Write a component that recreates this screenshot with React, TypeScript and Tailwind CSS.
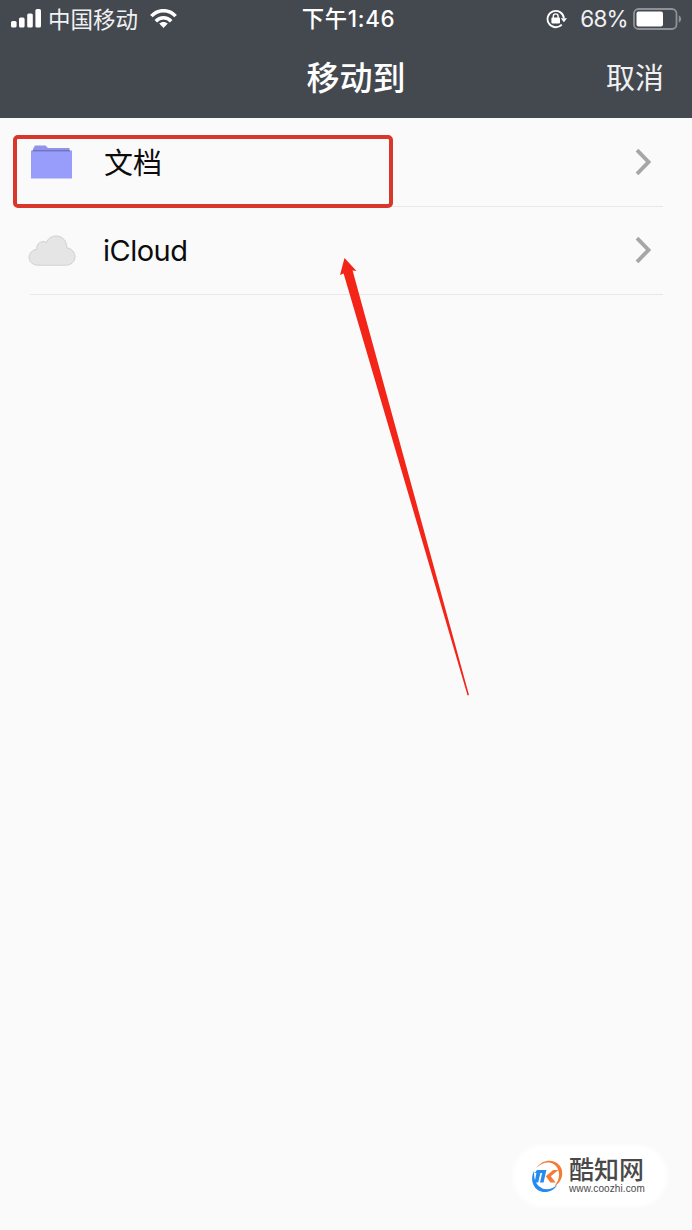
import type { ReactNode } from "react";

const cjk = "font-['Inter','Noto_Sans_CJK_SC',sans-serif]";

type LocationRowProps = {
  icon: ReactNode;
  label: string;
  labelClassName: string;
};

function SignalIcon() {
  return (
    <svg className="mb-[1px] h-[19px] w-[30px] shrink-0" viewBox="0 0 30 19" fill="#fff">
      <rect x="0" y="12" width="5.6" height="6.5" rx="1.6" />
      <rect x="8" y="8.5" width="5.6" height="10" rx="1.6" />
      <rect x="16.2" y="4.5" width="5.6" height="14" rx="1.6" />
      <rect x="24.4" y="0" width="5.6" height="18.5" rx="1.6" />
    </svg>
  );
}

function WifiIcon() {
  return (
    <svg className="h-[20px] w-[27px] shrink-0" viewBox="0 0 27 20">
      <g fill="none" stroke="#fff" strokeWidth="3.5">
        <path d="M1.4 7.2C8 -0.2 19 -0.2 25.6 7.2" />
        <path d="M5.8 12.2C10.2 7.6 16.8 7.6 21.2 12.2" />
      </g>
      <path d="M9.2 14.6C11.6 12.3 15.4 12.3 17.8 14.6L13.5 19Z" fill="#fff" />
    </svg>
  );
}

function RotationLockIcon() {
  return (
    <svg className="h-[20px] w-[21px] shrink-0" viewBox="0 0 21 20">
      <path d="M15.8 15.6A8.2 8.2 0 1 1 17.9 9.2" fill="none" stroke="#fff" strokeWidth="1.8" />
      <path d="M14.8 9.2H21L17.9 13.2Z" fill="#fff" />
      <rect x="5.4" y="8.6" width="8.6" height="5.8" rx="0.8" fill="#fff" />
      <path d="M7.3 9V7.3a2.4 2.4 0 0 1 4.8 0V9" fill="none" stroke="#fff" strokeWidth="1.4" />
    </svg>
  );
}

function BatteryIcon() {
  return (
    <svg className="h-[22px] w-[49px] shrink-0" viewBox="0 0 49 22">
      <rect x="1" y="1" width="42.5" height="20" rx="4.5" fill="none" stroke="#8e9196" strokeWidth="1.8" />
      <rect x="3.5" y="3.5" width="26.5" height="15" rx="2" fill="#fff" />
      <path d="M45.8 7.5C48.9 8.8 48.9 13.2 45.8 14.5Z" fill="#8e9196" />
    </svg>
  );
}

function FolderIcon() {
  return (
    <svg className="mr-[1px] h-[34px] w-[42px]" viewBox="0 0 42 34">
      <path d="M2 6V4L4 0.5H14.5L17 3H38.5V6Z" fill="#8f93ea" />
      <rect x="0" y="5.5" width="41" height="28" fill="#989dfc" />
      <path d="M1.5 5.8H39" stroke="#6367a8" strokeWidth="1" />
    </svg>
  );
}

function CloudIcon() {
  return (
    <svg className="h-[31px] w-[48px]" viewBox="0 0 48 31">
      <path
        d="M10 30.2C4.8 30.2 1 26.8 1 22.2C1 18.3 4.4 14.8 8.6 14.4C8.4 9.6 11.4 6.6 15 6.6C16.8 6.6 17.8 7.2 18.4 7.6C20 3.4 23.6 1 28 1C34.6 1 39 6 38.8 12.8C43.8 13.6 47 17.2 47 21.6C47 26.6 43 30.2 37.8 30.2Z"
        fill="#e5e5e5"
        stroke="#d0d0d0"
        strokeWidth="1"
      />
    </svg>
  );
}

function ChevronIcon() {
  return (
    <svg className="h-[28px] w-[16px] shrink-0" viewBox="0 0 16 28">
      <path d="M2 2.2L13.5 14L2 25.8" fill="none" stroke="#a6a6a6" strokeWidth="3.8" />
    </svg>
  );
}

function LocationRow({ icon, label, labelClassName }: LocationRowProps) {
  return (
    <li className="ml-[30px] mr-[29px] flex h-[88.5px] items-center border-b border-[#e8e8e9]">
      <div className="-ml-[2px] flex w-[48px] shrink-0 justify-center">{icon}</div>
      <span className={`ml-[27px] flex-1 text-[29px] leading-none text-[#0c0c0c] ${labelClassName}`}>{label}</span>
      <span className="mr-[12px]">
        <ChevronIcon />
      </span>
    </li>
  );
}

function StatusBar() {
  return (
    <div className="grid h-[38px] grid-cols-[1fr_auto_1fr] items-center pl-[11px] pr-[10px] text-white">
      <div className="flex items-center">
        <SignalIcon />
        <span className="ml-[7px] mr-[12px] pt-[2px] text-[22.5px] leading-none text-[#f0f1f2]">中国移动</span>
        <WifiIcon />
      </div>
      <span className="ml-[4px] text-[22.3px] font-medium leading-none tracking-[0.7px]">下午1:46</span>
      <div className="flex items-center justify-end">
        <RotationLockIcon />
        <span className="ml-[13px] mr-[5px] text-[22.5px] leading-none tracking-[-0.7px] text-[#f0f1f2]">68%</span>
        <BatteryIcon />
      </div>
    </div>
  );
}

function Watermark() {
  return (
    <div className="absolute left-[515px] top-[1147px] flex h-[58px] w-[150px] items-center rounded-[28px] bg-white pl-[16px] shadow-[0_0_5px_2px_#fff]">
      <svg className="h-[34px] w-[33px] shrink-0" viewBox="0 0 33 34">
        <path d="M5 9.2C12 -1.2 26.5 -0.6 30.4 9.6C32.9 17 29.4 24 23.2 27.4C27.6 22.4 29.4 16.4 27 10.4C23.4 1.4 12.4 1.4 5 9.2Z" fill="#f47b35" />
        <path d="M3.3 11.5C-1.2 19.6 1.5 29.2 9.4 32.2C15.8 34.6 22.4 31.8 26.4 26C20.4 30.6 13.8 32 8.6 27.8C3.7 23.8 2.6 17.5 3.3 11.5Z" fill="#268bf0" />
        <path d="M6 11H15.4L12.6 23.6H9L11.2 14H9.4L7.2 23.6H3.6L5.4 14H3.8Z" fill="#268bf0" />
        <path d="M22.2 11H27.4L19.8 17.2L24.6 23.6H19.4L14.8 17.2Z" fill="#f47b35" />
      </svg>
      <div className="mb-[2px] ml-[5px] text-[#494949]">
        <div className="h-[27px] text-[25px] font-medium leading-[27px]">酷知网</div>
        <div className="font-['Liberation_Sans',sans-serif] text-[10px] leading-[10px] tracking-[0.1px]">www.coozhi.com</div>
      </div>
    </div>
  );
}

export default function App() {
  return (
    <div className={`relative h-[1230px] w-[692px] overflow-hidden bg-[#fafafa] ${cjk}`}>
      <header className="h-[118px] bg-[#444950] text-white">
        <StatusBar />
        <div className="grid h-[80px] grid-cols-[1fr_auto_1fr] items-center pl-[48px] pr-[28px]">
          <span />
          <h1 className="text-[33px] font-medium leading-none">移动到</h1>
          <button className="justify-self-end text-[29px] leading-none text-[#f0f1f2]">取消</button>
        </div>
      </header>

      <ul>
        <LocationRow icon={<FolderIcon />} label="文档" labelClassName="pt-[4px] pl-[1px]" />
        <LocationRow icon={<CloudIcon />} label="iCloud" labelClassName="tracking-[-0.5px]" />
      </ul>

      <div className="absolute left-[13px] top-[135px] h-[73px] w-[380px] rounded-[5px] border-[4px] border-[#d9362c]" />
      <svg className="absolute left-[335px] top-[255px] h-[445px] w-[140px]" viewBox="0 0 140 445">
        <path d="M9.5 3L21.5 16L17.6 15.5L134 440L132.6 440.5L8.6 18.5L5 20Z" fill="#f32519" />
      </svg>

      <Watermark />
    </div>
  );
}
